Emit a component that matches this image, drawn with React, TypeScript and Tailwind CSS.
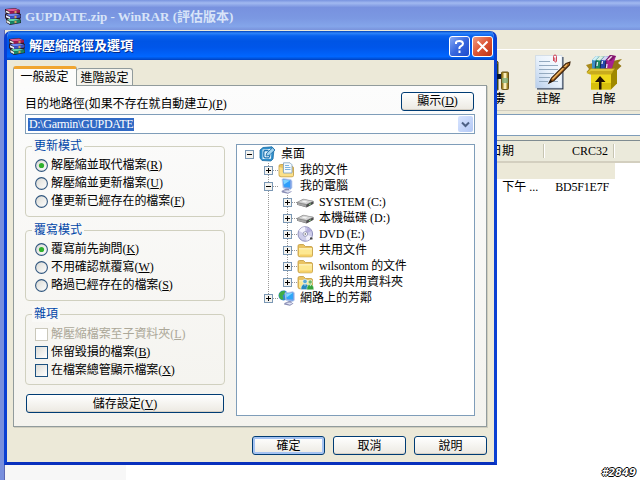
import React from "react";
import type { ReactNode } from "react";

const FONT =
  "font-['Liberation_Serif','Noto_Sans_CJK_TC',serif] text-[12px] leading-[16px] text-black whitespace-nowrap";

function Books({ className = "" }: { className?: string }) {
  return (
    <svg className={`shrink-0 ${className}`} width="17" height="17" viewBox="0 0 17 17">
      <path d="M0 1 10 0 15 2V5.500L16 6.500V10L15 11 16 12V15L5 17 1 14.500V11L0 10V6L1 5 0 4Z" fill="#2a1c2b" />
      <path d="M.5 1.300 10 .4 15 2.200 4.500 3.600Z" fill="#e0558f" />
      <path d="M4.500 3.600 15 2.200V4.600L4.500 6Z" fill="#a01650" />
      <path d="M.8 2.500 4.500 4V5.800L.8 4.200Z" fill="#f3edee" />
      <path d="M1 6.200 11 5.500 15.500 7 5 8.600Z" fill="#6f86f0" />
      <path d="M5 8.600 15.500 7V9.600L5 11Z" fill="#3a50c8" />
      <path d="M1 7.200 5 9V11L1 9.300Z" fill="#e8eefb" />
      <path d="M2 11.300 11 10.800 15.500 12 5 13.600Z" fill="#5fd8ae" />
      <path d="M5 13.600 15.500 12V14.600L5 16.200Z" fill="#168866" />
      <path d="M1.500 12 5 13.900V16L1.500 14.200Z" fill="#e3efe8" />
      <path d="M9.500 3 11.500 2.700V5L9.500 5.300ZM9.500 8 11.500 7.700V10L9.500 10.300ZM9.500 13 11.500 12.700V15L9.500 15.300Z" fill="#d3a05c" />
    </svg>
  );
}

function Virus() {
  return (
    <svg width="36" height="36" viewBox="0 0 36 36">
      <path d="M8 5 17 3 22 7V35H8Z" fill="#92751b" stroke="#4e4213" />
      <path d="M20 9h2v25h-2Z" fill="#33441c" />
      <path d="M19 19h7v5h-7Z" fill="#06142f" />
      <rect x="25.500" y="17" width="7" height="17.500" rx="1" fill="#a08324" stroke="#6b561a" />
      <path d="M27.500 18h3v16h-3Z" fill="#f9edb8" />
      <path d="M26 23h6v5h-6Z" fill="#7fae7a" opacity=".8" />
    </svg>
  );
}

function Note() {
  return (
    <svg width="38" height="36" viewBox="0 0 38 36">
      <defs>
        <linearGradient id="paper" x1="1" y1="0" x2="0" y2="1">
          <stop stopColor="#fbfdff" />
          <stop offset=".5" stopColor="#e9f2fc" />
          <stop offset="1" stopColor="#b7cdea" />
        </linearGradient>
      </defs>
      <path d="M3 3H29.500V35.500H3Z" fill="#39465a" />
      <path d="M1.500 1.500H28V34H1.500Z" fill="url(#paper)" stroke="#c3d1e2" strokeWidth=".6" />
      <path
        d="M5 7.500h11M5 11.500h19M5 15.500h19M5 19.500h15M5 23.500h11M5 27.500h9M19 27.500h5"
        stroke="#93a9bf"
        shapeRendering="crispEdges"
      />
      <path d="M19.500 7V2.500Q19.500 1 21 1T22.500 2.500V7Q22.500 8 21.500 8T20.800 7V3.500" fill="none" stroke="#cf3346" strokeWidth=".9" />
      <path d="M15 29 17.500 24 32 9.500 36 8 35.500 11 20 26.500Z" fill="#b06a20" stroke="#3d230c" strokeWidth="1.100" />
      <path d="M18.500 25 33 10.500" stroke="#eab565" strokeWidth="1.200" />
      <path d="m14.500 29.500 2-4 2 2Z" fill="#1d120a" />
      <path d="M28 13.500 31.500 14" stroke="#3d230c" />
    </svg>
  );
}

function Sfx() {
  return (
    <svg width="38" height="36" viewBox="0 0 38 36">
      <path d="M6 14 10 6 29 6 31 14V18H6Z" fill="#6a5710" />
      <path d="M1 11 8 9 9 16 5 20 1.500 18 4 15Z" fill="#a98a1c" />
      <path d="M28 7 37 5 33 9 36.500 12 30 18 27 16Z" fill="#937513" />
      <path d="m7 6 4-4 3 .5L11 17H7Z" fill="#3f8fc5" />
      <path d="m7 6 4-4 3 .5-4 4Z" fill="#d2f1f5" />
      <path d="m11 6 4-4 4 .5L15 17h-4Z" fill="#1c8a62" />
      <path d="m11 6 4-4 4 .5-4 4Z" fill="#ddf1e4" />
      <path d="m16 6 4-4 4 .5L20 17h-5Z" fill="#2345ab" />
      <path d="m16 6 4-4 4 .5-4 4Z" fill="#d4d8f3" />
      <path d="m21 6 4-5 6 1-5 15h-6Z" fill="#a62190" />
      <path d="m21 6 4-5 6 1-5 5Z" fill="#7d1468" />
      <path d="m22 6 4-4 1.500.5-4 4Z" fill="#f3ddeb" />
      <path d="m11 7-1 9m6-9-1 9m6-9-1 9" stroke="#121a31" strokeWidth=".8" />
      <path d="m12.500 8-.5 4m5.500-5-.5 3m5 0-.5 4" stroke="#e5edf6" strokeWidth="1.300" />
      <path d="M26 19 32 14V29.500L26 35.500Z" fill="#9f8900" />
      <path d="M6 19H26V35.500H6Z" fill="#eed91b" />
      <path d="M6 29H26V35.500H6Z" fill="#d7bf0c" />
      <path d="M1.500 19 6 14.500H30L26 20.500H5Z" fill="#c8ac1d" />
      <path d="M2 19 6 15H29L27 17H6Z" fill="#dfc837" />
      <path d="m15 22-5 6h4v7.500h2.500V28h4Z" fill="#241503" />
    </svg>
  );
}

function Key({ k }: { k: string }) {
  return (
    <span>
      (<span className="underline underline-offset-1">{k}</span>)
    </span>
  );
}

type Kind = "desktop" | "docs" | "computer" | "drive" | "dvd" | "folder" | "shared" | "network";

function TreeIcon({ kind }: { kind: Kind }) {
  return (
    <svg className="shrink-0" width="17" height="16" viewBox="0 0 17 16">
      {kind === "desktop" && (
        <>
          <path d="M1 4 4 1.500 13 .8 15 3 14 13 12 15 3 14.500 1 12Z" fill="#2f8fcc" stroke="#1c6da5" strokeWidth=".8" />
          <path d="M3.500 3.500 12.500 2.800 12 12.800 3.500 13Z" fill="#e4f3fc" />
          <path d="M9.500 4.500H6Q4.800 4.800 4.800 6.500V10.500Q5 11.800 6.500 11.800H9.500Q10.800 11.500 10.800 9" stroke="#1f76b4" strokeWidth="1.300" fill="none" />
          <path d="m7 10 .8-3L13.500 1.800 16 4 10 9.500Z" fill="#a4d4f0" stroke="#1f6ea8" strokeWidth=".9" />
        </>
      )}
      {(kind === "folder" || kind === "docs" || kind === "shared") && (
        <>
          <path d="M1 4Q1 2.500 2.500 2.500H6.500L8.500 4.500H14Q15.500 4.500 15.500 6V13.500Q15.500 14.800 14 14.800H3Q1 14.800 1 13Z" fill="#e9c362" stroke="#c39a3c" strokeWidth=".8" />
          {kind === "docs" ? (
            <>
              <path d="M1.500 5 4.500 6V10H15V14.300H3L1.500 13Z" fill="#fbe08a" />
              <path d="M5.500 .8h6.500l2 2v8.200H5.500Z" fill="#f4faff" stroke="#7ea0bd" strokeWidth=".8" />
              <path d="M7 3.500h4M7 5.500h5.500M7 7.500h5.500" stroke="#7db4e0" />
            </>
          ) : (
            <path d="M2 6.500H15V14.300H3L2 13Z" fill="#fde891" />
          )}
          {kind === "folder" && <path d="M3 12.500H15V14.300H3Z" fill="#f6cf66" />}
          {kind !== "docs" && <path d="M2 6.800H15" stroke="#fff8cf" />}
          {kind === "shared" && (
            <>
              <circle cx="8" cy="7.500" r="2.200" fill="#58a9d6" stroke="#fff" strokeWidth=".5" />
              <path d="M4 15.500q0-5.500 4-5.500t4 5.500Z" fill="#2688c0" stroke="#e6f3fb" strokeWidth=".5" />
              <circle cx="13.200" cy="8" r="2.100" fill="#6eb864" stroke="#fff" strokeWidth=".5" />
              <path d="M9.800 15.800q0-5.300 3.500-5.300t3.500 5.300Z" fill="#34a23c" stroke="#e7f6e6" strokeWidth=".5" />
              <path d="m7.300 10.500.7 1.800.7-1.800m4 .5.6 1.600.6-1.600" fill="#fff" />
            </>
          )}
        </>
      )}
      {kind === "computer" && (
        <>
          <path d="M4 1.500 5 .5 13 1.500 14 3V10L12.500 11.500 5 10Z" fill="#7ba3e6" stroke="#c4d3f1" strokeWidth=".8" />
          <path d="M5 1.800 12 2.500V9.500L6 8.800Z" fill="#2e9dfa" />
          <path d="M5 1.800 12 2.500 6 6.500Z" fill="#7fd3ff" />
          <path d="M8 10.500 11 11V12.500L14 13.500 10 15.700 4 14.500 3.500 13Z" fill="#8b8fb6" />
          <path d="m5 12.800 5-.6 3.300 1.200-3.500 1.400Z" fill="#e0e3f2" />
        </>
      )}
      {kind === "drive" && (
        <>
          <path d="m0 8.300 6-3.300 10.500 2v2.800l-7 3.700L0 10.700Z" fill="#6c6c6c" />
          <path d="m.5 8.200 6-3L16 7.200 9.500 10.300Z" fill="#dcdcdc" stroke="#a5a5a5" strokeWidth=".6" />
          <path d="m3.500 8 3.500-1.700 4.500.9-3 1.700Z" fill="#f4f4f4" stroke="#b8b8b8" strokeWidth=".4" />
          <path d="m.3 8.700 9 2.100v2.300L.3 10.700Z" fill="#a6a6a6" />
          <path d="m9.500 10.800 6.800-3.300v2.200l-6.800 3.500Z" fill="#4e4e4e" />
          <path d="M12 10.800 14 9.800" stroke="#8fe08c" strokeWidth=".9" />
        </>
      )}
      {kind === "dvd" && (
        <>
          <circle cx="8.300" cy="8" r="7.300" fill="#cdcdea" stroke="#8486b4" strokeWidth=".9" />
          <path d="M8.300 8 2 5A7 7 0 0 1 8 1Z" fill="#f4f4ff" />
          <path d="m8.300 8 6.300 2.500a7 7 0 0 1-5 4.300Z" fill="#f0effb" />
          <path d="M8.300 8 14.500 5A7 7 0 0 0 10.500 1.500Z" fill="#b3aedd" />
          <circle cx="8.300" cy="8" r="2.300" fill="#fff" stroke="#8588ad" strokeWidth=".8" />
          <circle cx="8.300" cy="8" r=".8" fill="#555" />
          <path d="M13 11.500h2.500v2H13Z" fill="#444" />
        </>
      )}
      {kind === "network" && (
        <>
          <circle cx="5.500" cy="5.500" r="5" fill="#3189cf" />
          <path d="M1 4Q3 .5 7 .7L6.500 4 4.500 5.500 5.500 9.500 3 9.500Q.3 7 1 4Z" fill="#3fae45" />
          <path d="M7 3 15 1.500 16.500 3V10L15 11.500 8 10.500Z" fill="#7ba3e6" stroke="#c5d5ef" strokeWidth=".7" />
          <path d="M8 3.800 15 2.800V9.500L8.800 9Z" fill="#2ea6f8" />
          <path d="M8 3.800 15 2.800 8.500 7.500Z" fill="#83d8ff" />
          <path d="M11 11 13.500 11.300V12.500L15.500 13.500 12 15.800 6 14.500 6.500 13Z" fill="#8b8fb6" />
          <path d="m7.500 13 4.500-.6 2.500 1-2.800 1.300Z" fill="#e0e3f2" />
        </>
      )}
    </svg>
  );
}

const TREE: { level: number; open?: boolean; kind: Kind; text: string; track?: string }[] = [
  { level: 0, open: true, kind: "desktop", text: "桌面" },
  { level: 1, kind: "docs", text: "我的文件" },
  { level: 1, open: true, kind: "computer", text: "我的電腦" },
  { level: 2, kind: "drive", text: "SYSTEM (C:)", track: "tracking-[-0.3px]" },
  { level: 2, kind: "drive", text: "本機磁碟 (D:)" },
  { level: 2, kind: "dvd", text: "DVD (E:)", track: "tracking-[-0.3px]" },
  { level: 2, kind: "folder", text: "共用文件" },
  { level: 2, kind: "folder", text: "wilsontom 的文件", track: "tracking-[-0.15px]" },
  { level: 2, kind: "shared", text: "我的共用資料夾" },
  { level: 1, kind: "network", text: "網路上的芳鄰" },
];

const INDENT = ["pl-[8px]", "pl-[27px]", "pl-[46px]"];

function Toggle({ open }: { open?: boolean }) {
  return (
    <svg className="shrink-0" width="9" height="9" viewBox="0 0 9 9" shapeRendering="crispEdges">
      <rect x=".5" y=".5" width="8" height="8" fill="#f5f3ee" stroke="#7b98b5" />
      <path d={open ? "M2 4.500H7" : "M2 4.500H7M4.500 2V7"} stroke="#000" />
    </svg>
  );
}

function Tree() {
  return (
    <div className="relative h-[272px] w-[239px] border border-[#7f9db9] bg-white pt-[1px]">
      <svg className="absolute left-0 top-0" width="80" height="170" shapeRendering="crispEdges">
        <path
          d="M31.500 18V153M50.500 50V138M36 25.500H41M36 41.500H41M36 153.500H41M55 57.500H61M55 73.500H61M55 89.500H61M55 105.500H61M55 121.500H61M55 137.500H61"
          stroke="#999"
          strokeDasharray="1 1"
          fill="none"
        />
      </svg>
      <div className="relative">
        {TREE.map((n) => (
          <div key={n.text} className={`flex h-[16px] items-center ${INDENT[n.level]}`}>
            <Toggle open={n.open} />
            <div className="ml-[5px] mr-[5px] flex">
              <TreeIcon kind={n.kind} />
            </div>
            <span className={n.track ?? ""}>{n.text}</span>
          </div>
        ))}
      </div>
    </div>
  );
}

function Button({ children, wide, primary }: { children: ReactNode; wide?: boolean; primary?: boolean }) {
  return (
    <button
      className={`flex shrink-0 items-center justify-center rounded-[3px] border border-[#003c74] bg-linear-to-b from-white via-[#f5f4f0] to-[#ece9e2] ${
        wide ? "h-[19px] w-[198px]" : "h-[19px] w-[73px]"
      } ${primary ? "shadow-[inset_0_0_0_2px_#a5c3f2]" : "shadow-[inset_0_-1px_0_#d6d0c5]"}`}
    >
      <span>{children}</span>
    </button>
  );
}

function Radio({ on }: { on?: boolean }) {
  return (
    <svg className="shrink-0" width="13" height="13" viewBox="0 0 13 13">
      <defs>
        <linearGradient id="dial" x1="0" y1="0" x2="1" y2="1">
          <stop stopColor="#d9d9d3" />
          <stop offset="1" stopColor="#fff" />
        </linearGradient>
      </defs>
      <circle cx="6.500" cy="6.500" r="5.900" fill="url(#dial)" stroke="#31577f" strokeWidth="1.100" />
      {on && <circle cx="6.500" cy="6.500" r="2.600" fill="#2fb02d" />}
    </svg>
  );
}

function Check({ off }: { off?: boolean }) {
  return (
    <span
      className={`size-[13px] shrink-0 border ${
        off ? "border-[#cac8bb] bg-white" : "border-[#1c5180] bg-linear-to-br from-[#dcdcd7] to-white"
      }`}
    />
  );
}

function Group({ title, children, pad }: { title: string; children: ReactNode; pad: string }) {
  return (
    <section className="relative h-[71px] rounded-[4px] border border-[#d0d0bf]">
      <span className="absolute left-[6px] top-[-9px] bg-[#f9f9f7] px-[2px] text-[#0046a8]">{title}</span>
      <div className={`flex flex-col gap-[2px] pl-[9px] ${pad}`}>{children}</div>
    </section>
  );
}

function Option({ mark, children, muted }: { mark: ReactNode; children: ReactNode; muted?: boolean }) {
  return (
    <label className={`flex h-[16px] items-center gap-[3px] ${muted ? "text-[#aca899]" : ""}`}>
      {mark}
      <span className="tracking-[-0.08px]">{children}</span>
    </label>
  );
}

function Dialog() {
  return (
    <div className="absolute left-[4px] top-[31px] flex h-[434px] w-[493px] flex-col overflow-hidden rounded-t-[7px] border-x-[3px] border-b-[3px] border-[#0a3fd2] border-b-[#0830bd] bg-[#ece9d8]">
      <header className="-mx-[3px] flex h-[29px] shrink-0 items-center bg-[linear-gradient(180deg,#0040b8_0%,#2f86fb_7%,#0862ee_17%,#0055e5_35%,#0056ea_58%,#0066ff_88%,#0050d6_96%,#003fc0_100%)] pl-[5px] pr-[4px]">
        <Books className="mt-[2px]" />
        <h2 className="ml-[3px] flex-1 pt-[1px] text-[13px] font-bold text-white [text-shadow:1px_1px_#062b87]">解壓縮路徑及選項</h2>
        <div className="flex gap-[2px] pt-[2px]">
          <span className="flex size-[21px] items-center justify-center rounded-[3px] border border-white bg-linear-to-br from-[#86a8f4] via-[#3867de] to-[#1c4acc]">
            <svg width="15" height="15" viewBox="0 0 15 15" fill="none" stroke="#fff" strokeWidth="2">
              <path d="M4 5V3.500Q4.500 2 7.500 2T11 4.500Q11 6 9 7.200T7.500 10M7.500 11.500V14" />
            </svg>
          </span>
          <span className="flex size-[21px] items-center justify-center rounded-[3px] border border-white bg-linear-to-br from-[#ee9a80] via-[#dc5433] to-[#bd3215]">
            <svg width="13" height="13" viewBox="0 0 13 13" stroke="#fff" strokeWidth="2">
              <path d="m1.500 1.500 10 10m0-10-10 10" />
            </svg>
          </span>
        </div>
      </header>

      <div className="flex flex-1 flex-col pl-[6px] pr-[7px] pt-[6px]">
        <nav className="relative z-10 flex h-[19px] items-end">
          <span className="-mb-[1px] flex h-[20px] w-[64px] items-center justify-center rounded-t-[3px] border-x border-t-[3px] border-x-[#919b9c] border-t-[#f0a530] bg-[#fcfcfb] pb-[2px] pr-[1px]">
            一般設定
          </span>
          <span className="flex h-[17px] w-[56px] items-center justify-center rounded-t-[3px] border-r border-t border-[#919b9c] bg-[#f5f4ee] pt-[1px]">
            進階設定
          </span>
        </nav>
        <div className="h-[342px] w-[474px] border border-[#919b9c] bg-linear-to-b from-[#fcfcfc] to-[#f4f3ee] pl-[11px] pr-[11px] pt-[5px] shadow-[1px_1px_#d0cebf]">
          <div className="flex h-[20px] items-center justify-between pr-[1px]">
            <span className="pt-[6px] tracking-[-0.05px]">
              目的地路徑(如果不存在就自動建立)
              <Key k="P" />
            </span>
            <Button>
              顯示
              <Key k="D" />
            </Button>
          </div>
          <div className="mt-[3px] flex h-[20px] w-[450px] items-center justify-between border border-[#7f9db9] bg-white pl-[2px] pr-[1px]">
            <span className="bg-[#316ac5] px-[1px] leading-[13px] tracking-[-0.34px] text-white">D:\Garmin\GUPDATE</span>
            <span className="flex h-[16px] w-[15px] items-center justify-center rounded-[2px] bg-linear-to-br from-[#d9e5ff] to-[#b3c8f5]">
              <svg width="9" height="7" viewBox="0 0 9 7" fill="none" stroke="#4d6185" strokeWidth="2">
                <path d="m1 1.500 3.500 3.500L8 1.500" />
              </svg>
            </span>
          </div>
          <div className="mt-[10px] flex justify-between">
            <div className="flex w-[200px] flex-col pt-[2px]">
              <Group title="更新模式" pad="pt-[10px]">
                <Option mark={<Radio on />}>解壓縮並取代檔案<Key k="R" /></Option>
                <Option mark={<Radio />}>解壓縮並更新檔案<Key k="U" /></Option>
                <Option mark={<Radio />}>僅更新已經存在的檔案<Key k="F" /></Option>
              </Group>
              <div className="h-[13px]" />
              <Group title="覆寫模式" pad="pt-[10px]">
                <Option mark={<Radio on />}>覆寫前先詢問<Key k="K" /></Option>
                <Option mark={<Radio />}>不用確認就覆寫<Key k="W" /></Option>
                <Option mark={<Radio />}>略過已經存在的檔案<Key k="S" /></Option>
              </Group>
              <div className="h-[13px]" />
              <Group title="雜項" pad="pt-[11px]">
                <Option muted mark={<Check off />}>解壓縮檔案至子資料夾<Key k="L" /></Option>
                <Option mark={<Check />}>保留毀損的檔案<Key k="B" /></Option>
                <Option mark={<Check />}>在檔案總管顯示檔案<Key k="X" /></Option>
              </Group>
              <div className="mt-[9px] flex justify-center">
                <Button wide>儲存設定<Key k="V" /></Button>
              </div>
            </div>
            <Tree />
          </div>
        </div>
        <footer className="mt-[9px] flex justify-end gap-[8px]">
          <Button primary>確定</Button>
          <Button>取消</Button>
          <Button>說明</Button>
        </footer>
      </div>
    </div>
  );
}

export default function App() {
  return (
    <main className={`relative flex h-[480px] w-[640px] flex-col overflow-hidden bg-white ${FONT}`}>
      <header className="flex h-[30px] shrink-0 items-center bg-[linear-gradient(180deg,#7893df_0%,#a1b9f0_10%,#7892df_25%,#7b98e2_60%,#84a5ea_88%,#7993dc_100%)] pl-[5px] pt-[2px]">
        <Books />
        <h1 className="ml-[3px] pt-[1px] text-[13px] font-bold tracking-[-0.02px] text-[#d8e4f8]">GUPDATE.zip - WinRAR (評估版本)</h1>
      </header>
      <div className="flex flex-1">
        <div className="w-[5px] shrink-0 border-r border-[#5b68b3] bg-[#788fdd]" />
        <div className="flex flex-1 flex-col">
          <div className="h-[20px] border-b border-white bg-[#ece9d8]" />
          <div className="flex h-[61px] justify-end border-b border-[#d0cdbf] bg-[#efecdf] pr-[9px] pt-[4px]">
            <div className="flex w-[55px] flex-col items-center pt-[1px]">
              <Virus />
              <span>掃毒</span>
            </div>
            <div className="flex w-[55px] flex-col items-center">
              <div className="pl-[9px]">
                <Note />
              </div>
              <span className="pt-[1px]">註解</span>
            </div>
            <div className="flex w-[55px] flex-col items-center">
              <div>
                <Sfx />
              </div>
              <span className="pt-[1px]">自解</span>
            </div>
          </div>
          <div className="h-[3px] bg-[#ece9d8]" />
          <div className="h-[22px] border-y border-[#7f9db9] bg-white" />
          <div className="h-[5px] border-b border-[#7f8c91] bg-[#ece9d8]" />
          <div className="flex h-[22px] items-center justify-end border-b-2 border-[#d3cfbf] bg-[#ebeadb]">
            <span className="w-[53px]">日期</span>
            <span className="h-[14px] w-[2px] border-l border-r border-l-[#c7c5b2] border-r-white" />
            <span className="w-[68px] pr-[5px] text-right">CRC32</span>
            <span className="h-[14px] w-[2px] border-l border-r border-l-[#c7c5b2] border-r-white" />
            <span className="w-[25px]" />
          </div>
          <div className="h-[16px] w-[610px] bg-[#ece9d8]" />
          <div className="flex h-[16px] justify-end pr-[31px]">
            <span className="w-[53px]">下午 ...</span>
            <span className="tracking-[-0.2px]">BD5F1E7F</span>
          </div>
          <div className="w-[121px] flex-1 bg-[#f7f7f7]" />
        </div>
      </div>
      <Dialog />
      <span className="absolute bottom-[1px] right-[4px] font-['DejaVu_Sans',sans-serif] text-[10px] font-bold italic leading-[12px] text-white [text-shadow:1px_0_#000,-1px_0_#000,0_1px_#000,0_-1px_#000]">
        #2849
      </span>
    </main>
  );
}
